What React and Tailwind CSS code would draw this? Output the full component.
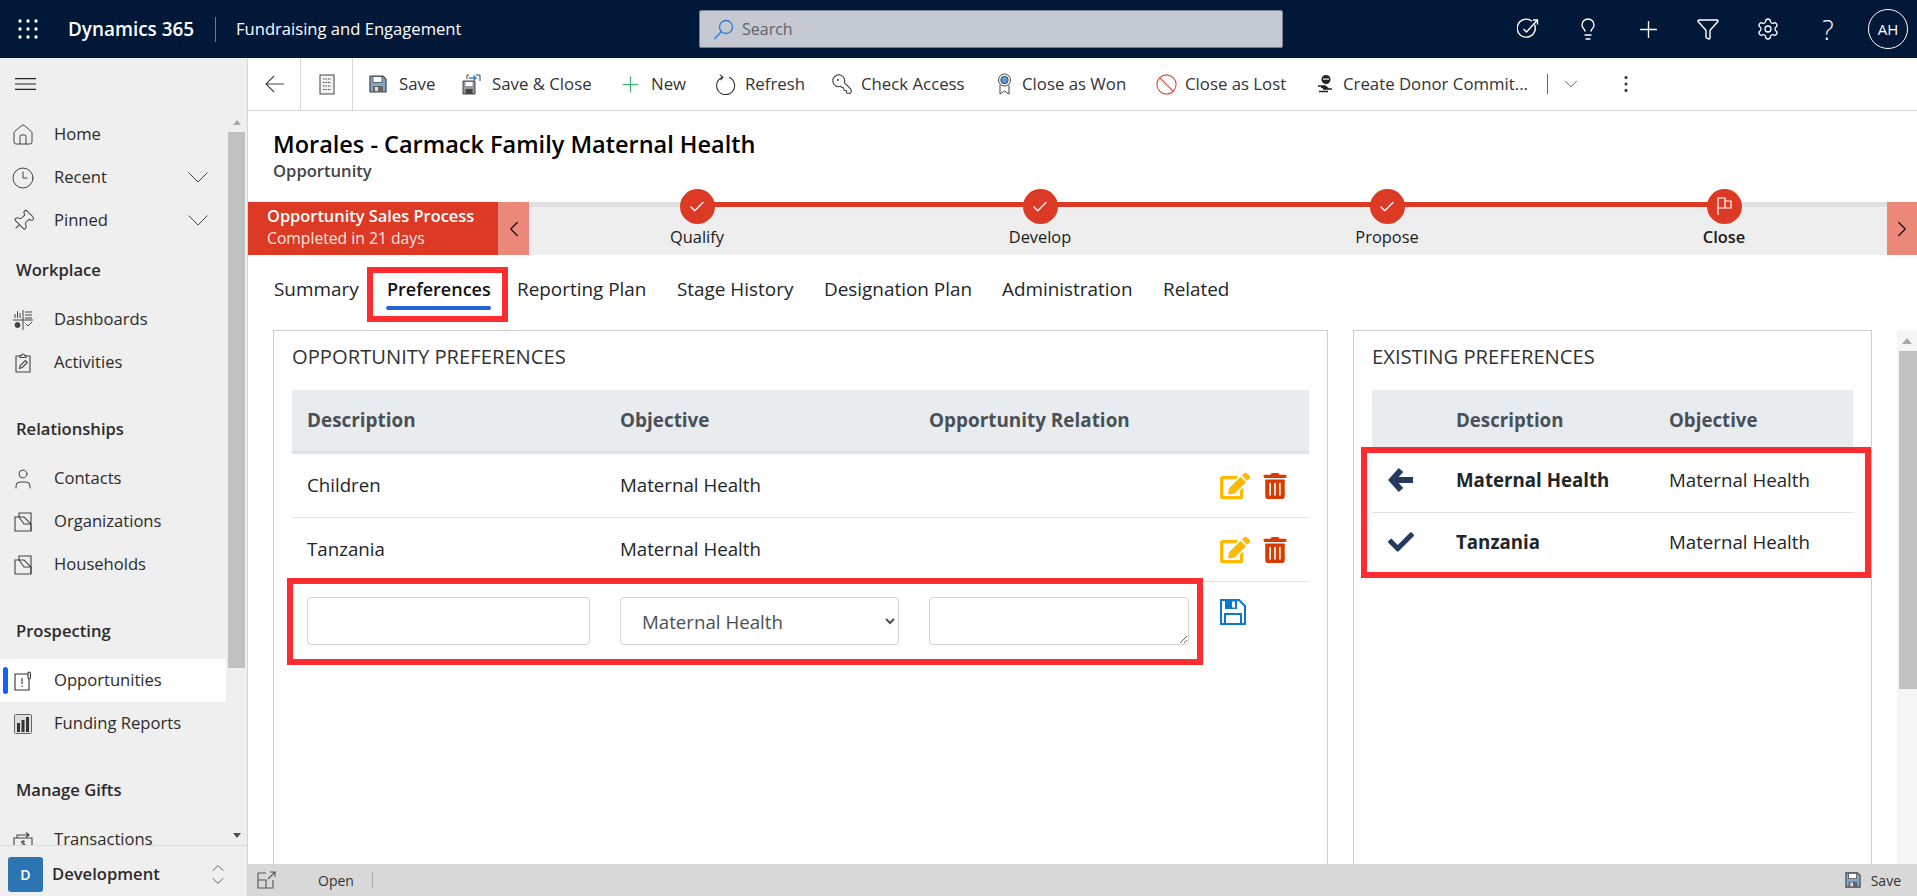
import React from "react";
import {
  House,
  Clock3,
  Pin,
  ChevronDown,
  ChevronUp,
  ChevronLeft,
  ChevronRight,
  Plus,
  Funnel,
  Settings,
  Lightbulb,
  User,
  KeyRound,
  Ban,
  Check,
  EllipsisVertical,
} from "lucide-react";
import { FaEdit, FaTrashAlt, FaCheck } from "react-icons/fa";

const Waffle = () => (
  <svg width="20" height="20" viewBox="0 0 20 20" fill="white">
    {[2, 10, 18].map((y) =>
      [2, 10, 18].map((x) => <circle key={x + "-" + y} cx={x} cy={y} r="1.7" />)
    )}
  </svg>
);

const TargetIcon = () => (
  <svg width="22" height="22" viewBox="0 0 22 22" fill="none" stroke="white" strokeWidth="1.4">
    <path d="M17.5 6.5A9 9 0 1 1 15 3.2" />
    <path d="M6.5 11l3 3L20 2.5M16 2h4.5v4.5" />
  </svg>
);

const SearchGlass = () => (
  <svg width="21" height="21" viewBox="0 0 21 21" fill="none" stroke="#2b7cd3" strokeWidth="1.3">
    <circle cx="13" cy="8" r="6.5" />
    <path d="M8.5 12.5L1.5 20" />
  </svg>
);

const BackArrow = () => (
  <svg width="19" height="18" viewBox="0 0 19 18" fill="none" stroke="#444" strokeWidth="1.1">
    <path d="M9 1L1 9l8 8M1 9h18" />
  </svg>
);

const Hamburger = () => (
  <svg width="21" height="12" viewBox="0 0 21 12" fill="none" stroke="#222" strokeWidth="1.1">
    <path d="M0 .6h21M0 6h21M0 11.400h21" />
  </svg>
);

const WideChevron = () => (
  <svg width="20" height="11" viewBox="0 0 20 11" fill="none" stroke="#444" strokeWidth="1">
    <path d="M.5.5L10 10 19.500.5" />
  </svg>
);

const DocList = () => (
  <svg width="16" height="21" viewBox="0 0 16 21" fill="none" stroke="#444" strokeWidth="1">
    <rect x="1" y="1" width="14" height="19" fill="#f2f2f2" />
    <path d="M4 5h8M4 8.500h8M4 12h8M4 15.500h8" strokeDasharray="1.500 1" />
  </svg>
);

const SaveIcon = ({ size = 18 }) => (
  <svg width={size} height={size} viewBox="0 0 18 18">
    <path d="M1 1h13l3 3v13H1z" fill="#7fa8d0" stroke="#444" strokeWidth="1.2" />
    <rect x="4" y="1.500" width="9" height="6" fill="#fff" stroke="#444" strokeWidth="0.8" />
    <rect x="4" y="11" width="10" height="6" fill="#666" />
    <rect x="6" y="12" width="3" height="4" fill="#ddd" />
  </svg>
);

const SaveCloseIcon = () => (
  <svg width="19" height="21" viewBox="0 0 19 21" fill="none">
    <path d="M1 7h12v13H1z" fill="#999" stroke="#444" />
    <rect x="3.500" y="8" width="7" height="4" fill="#fff" />
    <rect x="3.500" y="15" width="7" height="5" fill="#444" />
    <path d="M7 1h-2v4M14 1h4v6" stroke="#444" />
    <path d="M7 4h7M11.500 1.500L14 4l-2.500 2.500" stroke="#2b7cd3" strokeWidth="1.3" />
  </svg>
);

const RefreshIcon = () => (
  <svg width="21" height="21" viewBox="0 0 21 21" fill="none" stroke="#333" strokeWidth="1.1">
    <path d="M7.500 3.200a9 9 0 1 0 6.500.1" />
    <path d="M5 .8l3 2.600-2.400 2.800" />
  </svg>
);

const RibbonIcon = () => (
  <svg width="15" height="22" viewBox="0 0 15 22" fill="none" stroke="#444">
    <circle cx="7.500" cy="7" r="6" fill="#fff" />
    <circle cx="7.500" cy="7" r="3.700" fill="#5b9bd5" />
    <path d="M3 12v9l4.500-3 4.500 3v-9" />
  </svg>
);

const DonorIcon = () => (
  <svg width="17" height="20" viewBox="0 0 17 20" fill="#222">
    <circle cx="9" cy="5.500" r="4.500" />
    <rect x="6" y="4.500" width="6" height="1.200" fill="#fff" />
    <path d="M1 12h7l2 1.500H4M6 15h9M2 17.500h9" fill="none" stroke="#222" strokeWidth="1.300" />
  </svg>
);

const ActivityIcon = () => (
  <svg width="16" height="20" viewBox="0 0 16 20" fill="none" stroke="#444" strokeWidth="1.1">
    <path d="M5 3H1v16h14V3h-4" />
    <path d="M5 4.500V2.500h1.500a1.500 1.500 0 0 1 3 0H11v2z" />
    <path d="M4.500 15.500l.8-3 5-5 2 2-5 5z" />
  </svg>
);

const FolderDoc = () => (
  <svg width="18" height="20" viewBox="0 0 18 20" fill="none" stroke="#444" strokeWidth="1.1">
    <path d="M5 5V1h12v18" />
    <path d="M1 19V5h9l7 7v7z" />
    <path d="M5 5l5 7h7" />
  </svg>
);

const OppIcon = () => (
  <svg width="18" height="20" viewBox="0 0 18 20" fill="none" stroke="#333" strokeWidth="1.1">
    <path d="M14 3H1v16h14V8" />
    <path d="M8 7v6M8 14.500v1.500" />
    <rect x="14" y="1" width="2.400" height="7" rx="1.200" />
  </svg>
);

const ReportIcon = () => (
  <svg width="18" height="20" viewBox="0 0 18 20">
    <rect x="0.500" y="0.500" width="17" height="19" rx="1" fill="#ddd" stroke="#666" />
    <rect x="3" y="9" width="3" height="9" fill="#333" />
    <rect x="7.500" y="6" width="3" height="12" fill="#333" />
    <rect x="12" y="3" width="3" height="15" fill="#333" />
  </svg>
);

const DashIcon = () => (
  <svg width="20" height="20" viewBox="0 0 20 20" fill="none" stroke="#444" strokeWidth="1">
    <path d="M0 10h20M10 0v20" />
    <path d="M2 8V4M4.500 8V1M7 8V3M12 2h7M12 5h7M12 8h7" />
    <circle cx="4.500" cy="15" r="2.500" fill="#444" />
    <path d="M13 14l2 2 4-4" />
  </svg>
);

const TransIcon = () => (
  <svg width="20" height="20" viewBox="0 0 20 20" fill="none" stroke="#444" strokeWidth="1.1">
    <path d="M1 8h18v11H1z" />
    <path d="M4 8V5h12M13 2.500L16 5l-3 2.500" />
    <text x="10" y="17" fontSize="8" textAnchor="middle" fill="#444" stroke="none" fontWeight="700">$</text>
  </svg>
);

const ExpandIcon = () => (
  <svg width="20" height="18" viewBox="0 0 20 18" fill="none" stroke="#555" strokeWidth="1.1">
    <path d="M9 2H1v15h15V9M1 9h8v8" />
    <path d="M11 8l7-7M13 1h5v5" />
  </svg>
);

const FloppyBlue = () => (
  <svg width="26" height="26" viewBox="0 0 26 26" fill="none" stroke="#0b78d0" strokeWidth="2">
    <path d="M1 1h18l6 6v18H1z" />
    <path d="M5 1h12v9H5z" fill="#0b78d0" stroke="none" />
    <path d="M12 2.500h3v6h-3z" fill="#fff" stroke="none" />
    <path d="M5 25V15h16v10" />
  </svg>
);

const ChunkyArrow = () => (
  <svg width="26" height="26" viewBox="0 0 26 26" fill="none" stroke="#243a5e" strokeWidth="6" strokeLinejoin="miter">
    <path d="M13 3L4 13l9 10M5 13h20" />
  </svg>
);

const NavItem = ({ icon, label, chevron, active }) => (
  <div className={"relative flex items-center h-[43px] shrink-0 text-[16.6px] text-[#2b2b2b] " + (active ? "bg-white" : "")}>
    {active && <span className="absolute left-[3px] top-[8px] h-[27px] w-[5px] rounded-sm bg-[#0f62fe]" />}
    <span className="flex w-[54px] shrink-0 justify-center pr-[8px]">{icon}</span>
    <span className="flex-1">{label}</span>
    {chevron && <span className="mr-[18px]"><WideChevron /></span>}
  </div>
);

const NavHeader = ({ children, first }) => (
  <div className={"flex items-center h-[56px] shrink-0 pl-[16px] text-[16.6px] font-semibold text-[#2b2b2b] " + (first ? "" : "mt-[17px]")}>
    {children}
  </div>
);

const navIcon = { size: 24, strokeWidth: 1, className: "text-[#444]" };

const Sidebar = () => (
  <aside className="flex w-[248px] shrink-0 flex-col border-r border-[#d5d5d5] bg-[#efefef]">
    <div className="flex h-[55px] shrink-0 items-center pl-[15px] pb-[3px]">
      <Hamburger />
    </div>
    <div className="flex min-h-0 flex-1 border-b border-[#dcdcdc]">
      <nav className="flex w-[226px] shrink-0 flex-col overflow-hidden">
        <NavItem icon={<House {...navIcon} />} label="Home" />
        <NavItem icon={<Clock3 {...navIcon} />} label="Recent" chevron />
        <NavItem icon={<Pin {...navIcon} className="rotate-45 text-[#444]" />} label="Pinned" chevron />
        <NavHeader first>Workplace</NavHeader>
        <NavItem icon={<DashIcon />} label="Dashboards" />
        <NavItem icon={<ActivityIcon />} label="Activities" />
        <NavHeader>Relationships</NavHeader>
        <NavItem icon={<User {...navIcon} />} label="Contacts" />
        <NavItem icon={<FolderDoc />} label="Organizations" />
        <NavItem icon={<FolderDoc />} label="Households" />
        <NavHeader>Prospecting</NavHeader>
        <NavItem icon={<OppIcon />} label="Opportunities" active />
        <NavItem icon={<ReportIcon />} label="Funding Reports" />
        <NavHeader>Manage Gifts</NavHeader>
        <NavItem icon={<TransIcon />} label="Transactions" />
      </nav>
      <div className="ml-[2px] flex w-[17px] flex-col items-center">
        <div className="flex h-[19px] w-full items-center justify-center">
          <span className="h-0 w-0 border-x-[4px] border-b-[5px] border-x-transparent border-b-[#a8a8a8]" />
        </div>
        <div className="h-[536px] w-full bg-[#c1c1c1]" />
        <div className="flex flex-1 w-full items-end justify-center pb-[7px]">
          <span className="h-0 w-0 border-x-[4px] border-t-[5px] border-x-transparent border-t-[#505050]" />
        </div>
      </div>
    </div>
    <div className="flex h-[50px] shrink-0 items-center pl-[8px] pt-[6px]">
      <span className="flex h-[35px] w-[35px] items-center justify-center rounded-[3px] bg-[#2b75b3] text-[14px] font-semibold text-white">D</span>
      <span className="ml-[9px] flex-1 text-[16.6px] font-semibold text-[#2b2b2b]">Development</span>
      <span className="mr-[19px] flex flex-col text-[#444]">
        <ChevronUp size={20} strokeWidth={1} className="-mb-[7px]" />
        <ChevronDown size={20} strokeWidth={1} />
      </span>
    </div>
  </aside>
);

const TopBar = () => (
  <header className="flex h-[58px] shrink-0 items-center bg-[#011839] text-white">
    <span className="ml-[18px]"><Waffle /></span>
    <span className="ml-[30px] w-[147px] text-[18.9px] font-semibold">Dynamics 365</span>
    <span className="h-[25px] w-px bg-[#6a7a90]" />
    <span className="ml-[20px] w-[463px] text-[16.6px]">Fundraising and Engagement</span>
    <div className="flex h-[38px] w-[584px] items-center rounded-[2px] border border-[#77808e] bg-[#c5c9d1] pl-[13px] text-[16px] text-[#5f6368]">
      <SearchGlass />
      <span className="ml-[8px]">Search</span>
    </div>
    <div className="ml-[215px] flex w-[360px] shrink-0 items-center">
      <span className="flex w-[60px] justify-center"><TargetIcon /></span>
      <span className="flex w-[60px] justify-center"><Lightbulb size={24} strokeWidth={1.4} /></span>
      <span className="flex w-[60px] justify-center"><Plus size={27} strokeWidth={1.2} /></span>
      <span className="flex w-[60px] justify-center"><Funnel size={24} strokeWidth={1.4} /></span>
      <span className="flex w-[60px] justify-center"><Settings size={24} strokeWidth={1.3} /></span>
      <span className="flex w-[60px] justify-center text-[27px] font-light leading-none">?</span>
    </div>
    <span className="ml-[10px] flex h-[40px] w-[40px] items-center justify-center rounded-full border border-white text-[15px]">AH</span>
  </header>
);

const CmdItem = ({ icon, label, className }) => (
  <div className={"flex h-full shrink-0 items-center " + className}>
    <span className="flex w-[30px] justify-start">{icon}</span>
    <span className="whitespace-nowrap text-[16.8px] text-[#333]">{label}</span>
  </div>
);

const CommandBar = () => (
  <div className="flex h-[53px] shrink-0 items-center border-b border-[#d8d8d8] bg-white">
    <div className="flex h-full w-[53px] items-center justify-center border-r border-[#d8d8d8]">
      <BackArrow />
    </div>
    <div className="flex h-full w-[52px] items-center justify-center border-r border-[#d8d8d8]"><DocList /></div>
    <div className="flex h-full items-center pl-[14px]">
      <CmdItem icon={<SaveIcon />} label="Save" className="w-[95px] pl-[2px]" />
      <CmdItem icon={<SaveCloseIcon />} label="Save & Close" className="w-[159px]" />
      <CmdItem icon={<Plus size={25} strokeWidth={1.2} className="-ml-[3px] text-[#3cb371]" />} label="New" className="w-[94px]" />
      <CmdItem icon={<RefreshIcon />} label="Refresh" className="w-[116px]" />
      <CmdItem icon={<KeyRound size={22} strokeWidth={1.1} className="-scale-x-100 text-[#333]" />} label="Check Access" className="w-[161px]" />
      <CmdItem icon={<span className="ml-[5px]"><RibbonIcon /></span>} label="Close as Won" className="w-[163px]" />
      <CmdItem icon={<Ban size={23} strokeWidth={1.2} className="text-[#e3544a]" />} label="Close as Lost" className="w-[158px]" />
      <CmdItem icon={<span className="ml-[4px]"><DonorIcon /></span>} label="Create Donor Commit..." className="w-[234px]" />
      <span className="h-[20px] w-px bg-[#666]" />
      <ChevronDown size={22} strokeWidth={0.9} className="ml-[12px] text-[#444]" />
      <EllipsisVertical size={22} strokeWidth={1.4} className="ml-[33px] text-[#333]" />
    </div>
  </div>
);

const Stage = ({ label, icon, className, bold }) => (
  <div className={"relative z-10 flex w-[70px] shrink-0 flex-col items-center " + className}>
    <span className="mt-[-18px] flex h-[35px] w-[35px] items-center justify-center rounded-full bg-[#dc3a24] text-white">{icon}</span>
    <span className={"mt-[1px] whitespace-nowrap text-[16.4px] text-[#1a1a1a] " + (bold ? "font-semibold" : "")}>{label}</span>
  </div>
);

const FlagIcon = () => (
  <svg width="17" height="19" viewBox="0 0 17 19" fill="none" stroke="white" strokeWidth="1.2">
    <path d="M2 18V1h7v10H2M9 4h6v7H9" />
  </svg>
);

const ProcessBar = () => (
  <div className="flex h-[53px] shrink-0">
    <div className="flex w-[250px] shrink-0 flex-col justify-center bg-[#dc3a24] pb-[3px] pl-[19px] text-white">
      <span className="whitespace-nowrap text-[16.4px] font-semibold leading-[22px]">Opportunity Sales Process</span>
      <span className="whitespace-nowrap text-[15.700px] leading-[22px] text-[#fbe3df]">Completed in 21 days</span>
    </div>
    <div className="flex w-[31px] shrink-0 items-center justify-center bg-[#ec887a]">
      <ChevronLeft size={26} strokeWidth={1.1} className="text-[#111]" />
    </div>
    <div className="relative flex flex-1 border-t-[5px] border-[#e0e0e0] bg-[#eeeeee]">
      <span className="absolute left-[168px] top-[-5px] h-[5px] w-[1027px] bg-[#dc3a24]" />
      <Stage label="Qualify" className="ml-[133px] mr-[273px]" icon={<Check size={18} strokeWidth={1.7} />} />
      <Stage label="Develop" className="mr-[277px]" icon={<Check size={18} strokeWidth={1.7} />} />
      <Stage label="Propose" className="mr-[267px]" icon={<Check size={18} strokeWidth={1.7} />} />
      <Stage label="Close" bold icon={<FlagIcon />} />
    </div>
    <div className="flex w-[30px] shrink-0 items-center justify-center bg-[#ec887a]">
      <ChevronRight size={26} strokeWidth={1.1} className="text-[#111]" />
    </div>
  </div>
);

const Tab = ({ children, className }) => (
  <span className={"whitespace-nowrap text-[18.9px] text-[#212529] " + className}>{children}</span>
);

const Tabs = () => (
  <div className="flex h-[75px] shrink-0 items-start bg-white pl-[26px] pt-[12px]">
    <div className="flex h-[44px] items-center">
      <Tab className="w-[93px]">Summary</Tab>
    </div>
    <div className="relative flex h-[55px] w-[141px] items-center border-[6px] border-[#ff2d2f] pl-[14px] pb-[10px]">
      <span className="whitespace-nowrap text-[18px] font-semibold text-[#111]">Preferences</span>
      <span className="absolute bottom-[6px] left-[13px] h-[4px] w-[105px] rounded-full bg-[#2563d9]" />
    </div>
    <div className="flex h-[44px] items-center pl-[9px]">
      <Tab className="w-[160px]">Reporting Plan</Tab>
      <Tab className="w-[147px]">Stage History</Tab>
      <Tab className="w-[178px]">Designation Plan</Tab>
      <Tab className="w-[161px]">Administration</Tab>
      <Tab>Related</Tab>
    </div>
  </div>
);

const OpportunityCard = () => (
  <section className="h-[560px] w-[1055px] shrink-0 border border-[#cccccc] px-[18px]">
    <h2 className="mb-[8px] flex h-[51px] items-center text-[20.2px] text-[#333]">OPPORTUNITY PREFERENCES</h2>
    <div className="relative">
      <div className="grid h-[64px] grid-cols-[313px_309px_291px_1fr] items-center border-b-[3px] border-[#dee2e6] bg-[#e9ecef] text-[18.9px] font-bold text-[#495057]">
        <span className="pl-[15px]">Description</span>
        <span className="pl-[15px]">Objective</span>
        <span className="pl-[15px]">Opportunity Relation</span>
      </div>
      {["Children", "Tanzania"].map((name) => (
        <div key={name} className="grid h-[64px] grid-cols-[313px_309px_291px_1fr] items-center border-b border-[#dee2e6] text-[18.7px] text-[#212529]">
          <span className="pl-[15px]">{name}</span>
          <span className="pl-[15px]">Maternal Health</span>
          <span />
          <span className="flex items-center pl-[15px]">
            <FaEdit className="text-[#ffb900]" size={30} />
            <FaTrashAlt className="ml-[12px] text-[#d83b01]" size={26} />
          </span>
        </div>
      ))}
      <div className="grid h-[83px] grid-cols-[313px_309px_291px_1fr] pt-[15px]">
        <div className="pl-[15px]">
          <input className="h-[48px] w-[283px] rounded-[4px] border border-[#ced4da] bg-white" />
        </div>
        <div className="pl-[15px]">
          <select defaultValue="Maternal Health" className="h-[48px] w-[279px] rounded-[4px] border border-[#ced4da] bg-white pl-[17px] text-[18.7px] text-[#495057]">
            <option>Maternal Health</option>
          </select>
        </div>
        <div className="pl-[15px]">
          <textarea className="block h-[48px] w-[260px] rounded-[4px] border border-[#ced4da] bg-white" />
        </div>
        <div className="pl-[15px] pt-[2px]">
          <FloppyBlue />
        </div>
      </div>
      <div className="pointer-events-none absolute left-[-5px] top-[188px] h-[87px] w-[916px] border-[6px] border-[#ff2d2f]" />
    </div>
  </section>
);

const ExistingCard = () => (
  <section className="h-[560px] w-[519px] shrink-0 border border-[#cccccc] px-[18px]">
    <h2 className="mb-[8px] flex h-[51px] items-center text-[20.2px] text-[#333]">EXISTING PREFERENCES</h2>
    <div className="relative">
      <div className="grid h-[62px] grid-cols-[84px_213px_1fr] items-center bg-[#e9ecef] pb-[2px] text-[18.7px] font-bold text-[#495057]">
        <span />
        <span>Description</span>
        <span>Objective</span>
      </div>
      <div className="-mt-[4px] grid h-[65px] grid-cols-[84px_213px_1fr] items-center border-b border-[#dee2e6] text-[18.7px] text-[#212529]">
        <span className="pl-[16px]"><ChunkyArrow /></span>
        <span className="font-bold">Maternal Health</span>
        <span>Maternal Health</span>
      </div>
      <div className="grid h-[58px] grid-cols-[84px_213px_1fr] items-center text-[18.7px] text-[#212529]">
        <span className="pl-[16px]"><FaCheck className="text-[#243a5e]" size={26} /></span>
        <span className="font-bold">Tanzania</span>
        <span>Maternal Health</span>
      </div>
      <div className="pointer-events-none absolute left-[-11px] top-[57px] h-[131px] w-[510px] border-[6px] border-[#ff2d2f]" />
    </div>
  </section>
);

const Footer = () => (
  <footer className="flex h-[32px] shrink-0 items-center bg-[#d8d8d8] text-[14px] text-[#333]">
    <span className="ml-[9px]"><ExpandIcon /></span>
    <span className="ml-[41px]">Open</span>
    <span className="ml-[18px] h-[16px] w-px bg-[#aaa]" />
    <span className="ml-auto mr-[10px]"><SaveIcon size={16} /></span>
    <span className="mr-[16px]">Save</span>
  </footer>
);

export default function App() {
  return (
    <div className="flex h-screen w-full flex-col overflow-hidden bg-white font-['Open_Sans','Noto_Sans',sans-serif]">
      <TopBar />
      <div className="flex min-h-0 flex-1">
        <Sidebar />
        <main className="flex min-w-0 flex-1 flex-col">
          <CommandBar />
          <div className="flex h-[91px] shrink-0 flex-col pl-[25px] pt-[17px]">
            <h1 className="text-[23.5px] font-semibold leading-[33px] text-black">Morales - Carmack Family Maternal Health</h1>
            <span className="text-[16.6px] font-semibold leading-[20px] text-[#444]">Opportunity</span>
          </div>
          <ProcessBar />
          <Tabs />
          <div className="flex min-h-0 flex-1 overflow-hidden">
            <div className="flex flex-1 gap-[25px] pl-[25px]">
              <OpportunityCard />
              <ExistingCard />
            </div>
            <div className="flex w-[20px] shrink-0 flex-col bg-[#f6f6f6]">
              <div className="flex h-[21px] items-center justify-center">
                <span className="h-0 w-0 border-x-[5px] border-b-[6px] border-x-transparent border-b-[#a8a8a8]" />
              </div>
              <div className="ml-[2px] h-[338px] bg-[#c1c1c1]" />
            </div>
          </div>
          <Footer />
        </main>
      </div>
    </div>
  );
}
